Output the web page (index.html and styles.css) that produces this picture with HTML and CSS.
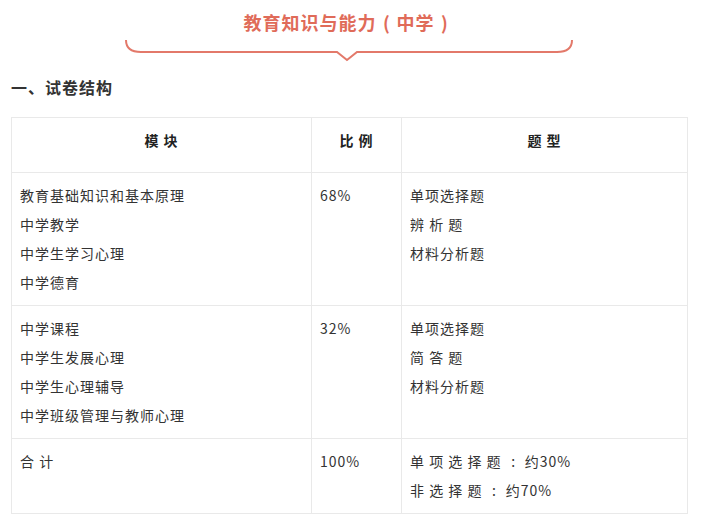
FILE: index.html
```html
<!DOCTYPE html>
<html lang="zh-CN">
<head>
<meta charset="utf-8">
<title>教育知识与能力（中学）</title>
<link rel="stylesheet" href="styles.css">
</head>
<body>
<div class="page">
  <header class="title-block">
    <h1 class="title">教育知识与能力<span class="paren">(</span>中学<span class="paren">)</span></h1>
    <svg class="deco" width="448" height="22" viewBox="0 0 448 22" aria-hidden="true">
      <path d="M1 0 Q1 12 16 12 H 212 L 222 20 L 232 12 H 432 Q 447 12 447 0" fill="none" stroke="#e3796a" stroke-width="2"/>
    </svg>
  </header>
  <h2 class="heading">一、试卷结构</h2>
  <table class="exam">
    <colgroup>
      <col class="c1">
      <col class="c2">
      <col class="c3">
    </colgroup>
    <thead>
      <tr>
        <th>模 块</th>
        <th>比 例</th>
        <th>题 型</th>
      </tr>
    </thead>
    <tbody>
      <tr>
        <td><p>教育基础知识和基本原理</p><p>中学教学</p><p>中学生学习心理</p><p>中学德育</p></td>
        <td><p>68%</p></td>
        <td><p>单项选择题</p><p>辨 析 题</p><p>材料分析题</p></td>
      </tr>
      <tr>
        <td><p>中学课程</p><p>中学生发展心理</p><p>中学生心理辅导</p><p>中学班级管理与教师心理</p></td>
        <td><p>32%</p></td>
        <td><p>单项选择题</p><p>简 答 题</p><p>材料分析题</p></td>
      </tr>
      <tr>
        <td><p>合 计</p></td>
        <td><p>100%</p></td>
        <td><p>单 项 选 择 题 <span class="colon">:</span> 约30%</p><p>非 选 择 题 <span class="colon">:</span> 约70%</p></td>
      </tr>
    </tbody>
  </table>
</div>
</body>
</html>
```

FILE: styles.css
```css
* { box-sizing: border-box; }
html, body { margin: 0; padding: 0; background: #fff; }
body {
  font-family: "Noto Sans CJK SC", "Noto Sans", sans-serif;
  color: #333;
}
.page {
  width: 698px;
  padding: 8px 11px 0;
}
.title-block {
  display: flex;
  flex-direction: column;
  align-items: center;
}
.title {
  margin: 0;
  font-size: 18px;
  line-height: 28px;
  font-weight: 700;
  letter-spacing: 1px;
  color: #e06b59;
}
.paren {
  display: inline-block;
  width: 20px;
  text-align: center;
  letter-spacing: 0;
}
.deco {
  display: block;
  margin-top: 4px;
}
.heading {
  margin: 13px 0 0;
  font-size: 16px;
  line-height: 24px;
  font-weight: 700;
  letter-spacing: 1px;
  color: #333;
}
.exam {
  margin-top: 18px;
  width: 676px;
  border-collapse: collapse;
  table-layout: fixed;
  font-size: 14px;
  letter-spacing: 1px;
}
.c1 { width: 300px; }
.c2 { width: 90px; }
.c3 { width: 286px; }
.exam th, .exam td {
  border: 1px solid #e9e9e9;
  text-align: left;
  vertical-align: top;
}
.exam th {
  text-align: center;
  font-weight: 700;
  line-height: 29px;
  padding: 8px 8px 17px;
  color: #222;
}
.exam td {
  padding: 8px 8px 8px;
}
.exam p {
  margin: 0;
  line-height: 29px;
}
.colon {
  display: inline-block;
  width: 15px;
  text-align: center;
  letter-spacing: 0;
}
```
